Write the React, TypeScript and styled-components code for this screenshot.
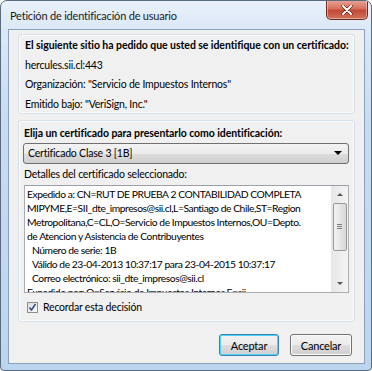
import React, { useState } from 'react';
import styled, { createGlobalStyle } from 'styled-components';

const GlobalStyle = createGlobalStyle`
  html, body {
    margin: 0;
    padding: 0;
    background: #ffffff;
  }
  body {
    font-family: 'Lato', 'Liberation Sans', sans-serif;
    font-size: 10.5px;
    letter-spacing: -0.2px;
    color: #000;
  }
`;

const Window = styled.div`
  position: relative;
  width: 372px;
  height: 371px;
  box-sizing: border-box;
  border: 1px solid #5a6b7d;
  border-radius: 7px 7px 4px 4px;
  background: linear-gradient(180deg, #e9f1fa 0px, #dbe8f6 28px, #c6dcf2 120px, #bcd5ef 371px);
  display: flex;
  flex-direction: column;
  padding: 0 6px 6px 7px;
  overflow: hidden;
`;

const TitleBar = styled.div`
  height: 28px;
  display: flex;
  align-items: center;
  padding-left: 2px;
  font-size: 11px;
  color: #1a1a1a;
`;

const CloseButton = styled.div`
  position: absolute;
  top: -1px;
  right: 3px;
  width: 42px;
  height: 20px;
  box-sizing: border-box;
  border: 1px solid #6b2a22;
  border-top: none;
  border-radius: 0 0 5px 5px;
  background: linear-gradient(180deg, #e8a699 0%, #d7705e 45%, #c24a36 55%, #d0725b 100%);
  display: flex;
  align-items: center;
  justify-content: center;
  box-shadow: inset 0 0 0 1px rgba(255, 220, 210, 0.5);
`;

const Client = styled.div`
  flex: 1;
  background: #f0f0f0;
  border: 1px solid #8aa1b9;
  display: flex;
  flex-direction: column;
  padding: 4px 9px 0 9px;
`;

const GroupBox = styled.div<{ $height: number }>`
  height: ${({ $height }) => $height}px;
  box-sizing: border-box;
  border: 1px solid #d5dfe5;
  border-radius: 3px;
  box-shadow: inset 0 0 0 1px #fafcfd;
  display: flex;
  flex-direction: column;
  margin-bottom: 6px;
`;

const InfoGroup = styled(GroupBox)`
  padding: 1px 6px 0 6px;
`;

const InfoLine = styled.div<{ $bold?: boolean }>`
  height: 19.5px;
  line-height: 19.5px;
  white-space: nowrap;
  font-weight: ${({ $bold }) => ($bold ? 700 : 400)};
  letter-spacing: ${({ $bold }) => ($bold ? '-0.06px' : '-0.2px')};
`;

const CertGroup = styled(GroupBox)`
  padding: 2px 5px 0 4px;
`;

const Label = styled.div<{ $bold?: boolean }>`
  height: 20px;
  line-height: 20px;
  padding-left: 1px;
  white-space: nowrap;
  font-weight: ${({ $bold }) => ($bold ? 700 : 400)};
  letter-spacing: ${({ $bold }) => ($bold ? '-0.06px' : '-0.2px')};
`;

const Select = styled.div`
  height: 21px;
  box-sizing: border-box;
  border: 1px solid #707070;
  border-radius: 3px;
  background: linear-gradient(180deg, #f2f2f2 0%, #ebebeb 50%, #dddddd 51%, #cfcfcf 100%);
  display: flex;
  align-items: center;
  justify-content: space-between;
  padding: 0 6px 0 4px;
`;

const Arrow = styled.span`
  width: 0;
  height: 0;
  border-left: 4px solid transparent;
  border-right: 4px solid transparent;
  border-top: 4px solid #000;
`;

const Details = styled.div`
  height: 110px;
  box-sizing: border-box;
  border: 1px solid #abadb3;
  border-top-color: #9ba0a8;
  background: #ffffff;
  display: flex;
  margin: 1px 0 0 1px;
  overflow: hidden;
`;

const DetailText = styled.div`
  flex: 1;
  min-width: 0;
  overflow: hidden;
  padding: 1px 0 0 2px;
  font-size: 10.3px;
  letter-spacing: -0.45px;
`;

const DetailLine = styled.div<{ $indent?: boolean }>`
  height: 14.1px;
  line-height: 14.1px;
  white-space: nowrap;
  padding-left: ${({ $indent }) => ($indent ? 5 : 0)}px;
`;

const ScrollBar = styled.div`
  width: 17px;
  flex-shrink: 0;
  background: linear-gradient(90deg, #e6e6e6, #f4f4f4);
  display: flex;
  flex-direction: column;
  align-items: center;
`;

const ScrollArrow = styled.div<{ $up?: boolean }>`
  height: 17px;
  display: flex;
  align-items: center;
  justify-content: center;
  &::after {
    content: '';
    border-left: 3px solid transparent;
    border-right: 3px solid transparent;
    ${({ $up }) => ($up ? 'border-bottom: 3px solid #555;' : 'border-top: 3px solid #555;')}
  }
`;

const ScrollTrack = styled.div`
  flex: 1;
`;

const Thumb = styled.div`
  width: 14px;
  height: 48px;
  box-sizing: border-box;
  border: 1px solid #979797;
  border-radius: 2px;
  background: linear-gradient(90deg, #f3f3f3, #e6e6e6 50%, #d8d8d8);
  display: flex;
  flex-direction: column;
  justify-content: center;
  align-items: center;
  gap: 1px;
  & > span {
    width: 5px;
    height: 1px;
    background: #7d7d7d;
  }
`;

const CheckRow = styled.label`
  height: 28px;
  display: flex;
  align-items: center;
  gap: 5px;
  padding-left: 4px;
  cursor: default;
`;

const CheckBox = styled.span`
  width: 11px;
  height: 11px;
  box-sizing: border-box;
  border: 1px solid #8f8f8f;
  background: linear-gradient(135deg, #dcdcdc, #fbfbfb);
  display: flex;
  align-items: center;
  justify-content: center;
`;

const Footer = styled.div`
  display: flex;
  justify-content: flex-end;
  gap: 11px;
  padding: 6px 3px 0 0;
`;

const Button = styled.button<{ $default?: boolean }>`
  width: ${({ $default }) => ($default ? 60 : 62)}px;
  height: 22px;
  box-sizing: border-box;
  font-family: inherit;
  font-size: 11px;
  letter-spacing: -0.2px;
  color: #000;
  border: 1px solid ${({ $default }) => ($default ? '#3c7fb1' : '#707070')};
  border-radius: 3px;
  background: linear-gradient(180deg, #f2f2f2 0%, #ebebeb 50%, #dddddd 51%, #cfcfcf 100%);
  box-shadow: inset 0 0 0 1px ${({ $default }) => ($default ? '#48d6ff' : '#fcfcfc')};
  padding: 0;
`;

const detailLines: { text: string; indent?: boolean }[] = [
  { text: 'Expedido a: CN=RUT DE PRUEBA 2 CONTABILIDAD COMPLETA' },
  { text: 'MIPYME,E=SII_dte_impresos@sii.cl,L=Santiago de Chile,ST=Region' },
  { text: 'Metropolitana,C=CL,O=Servicio de Impuestos Internos,OU=Depto.' },
  { text: 'de Atencion y Asistencia de Contribuyentes' },
  { text: 'Número de serie: 1B', indent: true },
  { text: 'Válido de 23-04-2013 10:37:17 para 23-04-2015 10:37:17', indent: true },
  { text: 'Correo electrónico: sii_dte_impresos@sii.cl', indent: true },
  { text: 'Expedido por: O=Servicio de Impuestos Internos,E=sii' },
];

export default function App() {
  const [remember, setRemember] = useState(true);

  return (
    <>
      <GlobalStyle />
      <Window>
        <TitleBar>Petición de identificación de usuario</TitleBar>
        <CloseButton>
          <svg width="12" height="10" viewBox="0 0 12 10">
            <path d="M2 1 L10 9 M10 1 L2 9" stroke="#5a1a12" strokeWidth="3.2" strokeLinecap="round" />
            <path d="M2 1 L10 9 M10 1 L2 9" stroke="#ffffff" strokeWidth="2" strokeLinecap="round" />
          </svg>
        </CloseButton>
        <Client>
          <InfoGroup $height={80}>
            <InfoLine $bold>El siguiente sitio ha pedido que usted se identifique con un certificado:</InfoLine>
            <InfoLine>hercules.sii.cl:443</InfoLine>
            <InfoLine>Organización: "Servicio de Impuestos Internos"</InfoLine>
            <InfoLine>Emitido bajo: "VeriSign, Inc."</InfoLine>
          </InfoGroup>
          <CertGroup $height={202}>
            <Label $bold>Elija un certificado para presentarlo como identificación:</Label>
            <Select>
              <span>Certificado Clase 3 [1B]</span>
              <Arrow />
            </Select>
            <Label>Detalles del certificado seleccionado:</Label>
            <Details>
              <DetailText>
                {detailLines.map((l, i) => (
                  <DetailLine key={i} $indent={l.indent}>{l.text}</DetailLine>
                ))}
              </DetailText>
              <ScrollBar>
                <ScrollArrow $up />
                <Thumb>
                  <span />
                  <span />
                  <span />
                </Thumb>
                <ScrollTrack />
                <ScrollArrow />
              </ScrollBar>
            </Details>
            <CheckRow onClick={() => setRemember(!remember)}>
              <CheckBox>
                {remember && (
                  <svg width="9" height="9" viewBox="0 0 9 9">
                    <path d="M1.5 4.5 L3.5 7 L7.5 1" fill="none" stroke="#2b4a8b" strokeWidth="1.5" />
                  </svg>
                )}
              </CheckBox>
              Recordar esta decisión
            </CheckRow>
          </CertGroup>
          <Footer>
            <Button $default>Aceptar</Button>
            <Button>Cancelar</Button>
          </Footer>
        </Client>
      </Window>
    </>
  );
}
